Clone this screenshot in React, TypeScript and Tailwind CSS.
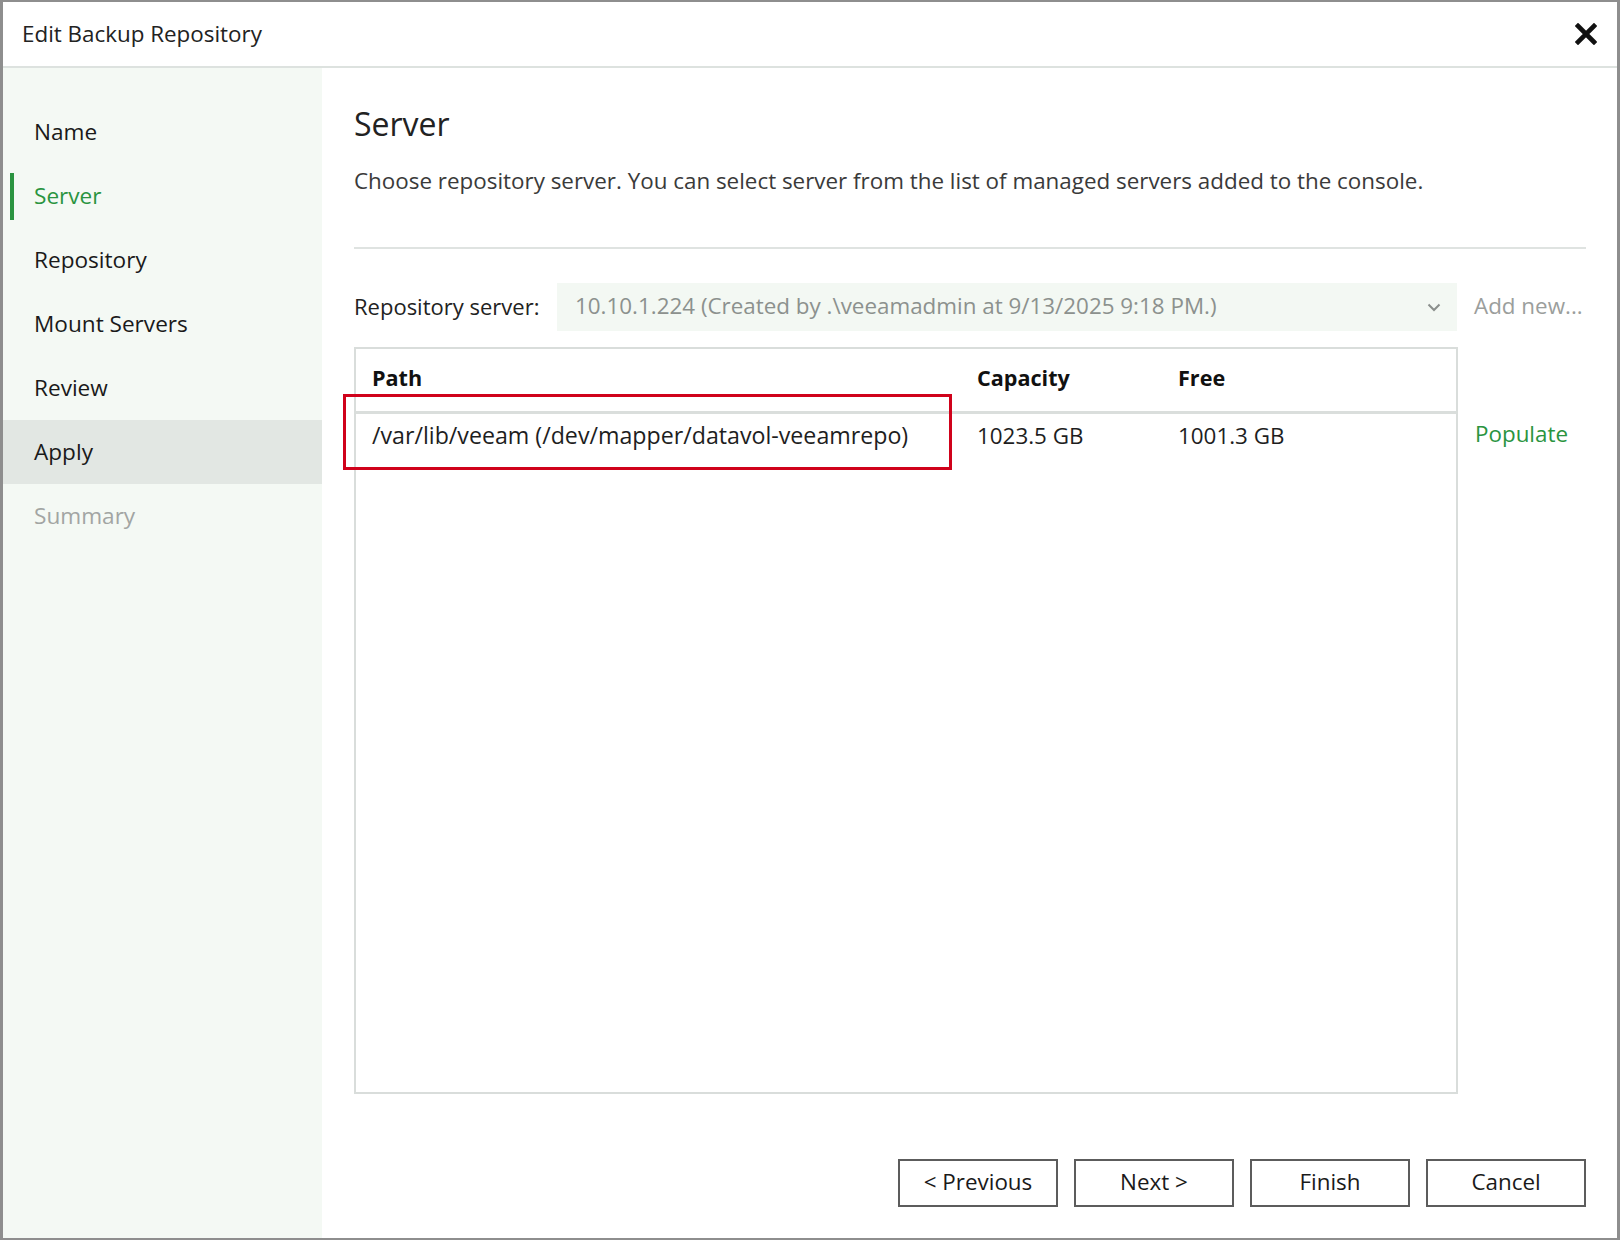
import React from "react";

const font = { fontFamily: '"Open Sans", "Noto Sans", sans-serif' };

function CloseIcon() {
  return (
    <svg width="22" height="22" viewBox="0 0 22 22" className="block">
      <path d="M3 3 L19 19 M19 3 L3 19" stroke="#111" strokeWidth="4.6" strokeLinecap="square" fill="none" />
    </svg>
  );
}

function Chevron() {
  return (
    <svg width="14" height="9" viewBox="0 0 14 9" className="block">
      <path d="M1.5 1.5 L7 7 L12.5 1.5" stroke="#8a8f8c" strokeWidth="2" fill="none" />
    </svg>
  );
}

const steps = ["Name", "Server", "Repository", "Mount Servers", "Review", "Apply", "Summary"];

export default function App() {
  return (
    <div
      className="w-[1620px] h-[1240px] bg-white border-x-[3px] border-y-2 border-[#8e8e8e] flex flex-col text-[#1e1e1e]"
      style={font}
    >
      {/* Title bar */}
      <div className="h-[66px] shrink-0 border-b-2 border-[#dde2df] flex items-center justify-between pl-[19px] pr-[20px]">
        <div className="text-[22.4px] text-[#222]">Edit Backup Repository</div>
        <CloseIcon />
      </div>

      {/* Body */}
      <div className="flex flex-1 min-h-0">
        {/* Sidebar */}
        <div className="w-[319px] shrink-0 bg-[#f4f9f4] pt-[32px] flex flex-col">
          {steps.map((s) => {
            const active = s === "Server";
            const hl = s === "Apply";
            const muted = s === "Summary";
            return (
              <div
                key={s}
                className={`relative h-[64px] flex items-center pl-[31px] text-[22.6px] ${hl ? "bg-[#e2e7e3]" : ""} ${
                  active ? "text-[#2a9440]" : muted ? "text-[#a2a5a3]" : "text-[#1a1a1a]"
                }`}
              >
                {active && <div className="absolute left-[7px] top-[9px] w-[4px] h-[47px] bg-[#2a9440]" />}
                {s}
              </div>
            );
          })}
        </div>

        {/* Main */}
        <div className="flex-1 flex flex-col pl-[32px] pr-[31px] pt-[36px] pb-[31px] min-w-0">
          <div className="h-[40px] leading-[40px] text-[32px] text-[#222]">Server</div>
          <div className="mt-[22px] h-[30px] leading-[30px] text-[22.4px] text-[#3a3a3a] whitespace-nowrap">
            Choose repository server. You can select server from the list of managed servers added to the console.
          </div>
          <div className="mt-[51px] h-[2px] bg-[#dfe3e1]" />

          {/* Repository server row */}
          <div className="mt-[34px] h-[48px] flex items-center">
            <div className="w-[203px] shrink-0 text-[22px] text-[#222] pb-[2px]">Repository server:</div>
            <div className="w-[900px] shrink-0 h-[48px] bg-[#f3f8f3] flex items-center justify-between pl-[18px] pr-[16px]">
              <span className="text-[22.4px] text-[#8c918e] whitespace-nowrap pb-[2px]">
                10.10.1.224 (Created by .\veeamadmin at 9/13/2025 9:18 PM.)
              </span>
              <Chevron />
            </div>
            <div className="ml-[17px] text-[22.4px] text-[#9b9e9c] whitespace-nowrap pb-[2px]">Add new...</div>
          </div>

          {/* Table row */}
          <div className="mt-[16px] flex flex-1 min-h-0">
            <div className="relative w-[1104px] shrink-0 border-2 border-[#d9dddb] flex flex-col">
              <div className="h-[62px] pb-[4px] grid grid-cols-[605px_201px_1fr] items-center font-bold text-[21.6px] text-[#111]">
                <div className="pl-[16px]">Path</div>
                <div className="pl-[16px]">Capacity</div>
                <div className="pl-[16px]">Free</div>
              </div>
              <div className="h-[3px] bg-[#dadedc]" />
              <div className="h-[48px] pb-[5px] grid grid-cols-[605px_201px_1fr] items-center text-[22.4px] text-[#1e1e1e]">
                <div className="pl-[16px] whitespace-nowrap text-[23.2px]">/var/lib/veeam (/dev/mapper/datavol-veeamrepo)</div>
                <div className="pl-[16px]">1023.5 GB</div>
                <div className="pl-[16px]">1001.3 GB</div>
              </div>
              <div className="absolute left-[-13px] top-[45px] w-[609px] h-[76px] border-[3px] border-[#d0021b] pointer-events-none" />
            </div>
            <div className="ml-[17px] pt-[72px]">
              <div className="h-[30px] leading-[30px] text-[22.4px] text-[#2a9440]">Populate</div>
            </div>
          </div>

          {/* Buttons */}
          <div className="mt-[65px] flex justify-end gap-[16px]">
            {["< Previous", "Next >", "Finish", "Cancel"].map((b) => (
              <div
                key={b}
                className="w-[160px] h-[48px] pb-[3px] border-2 border-[#5c5c5c] bg-white flex items-center justify-center text-[22.4px] text-[#1a1a1a]"
              >
                {b}
              </div>
            ))}
          </div>
        </div>
      </div>
    </div>
  );
}
